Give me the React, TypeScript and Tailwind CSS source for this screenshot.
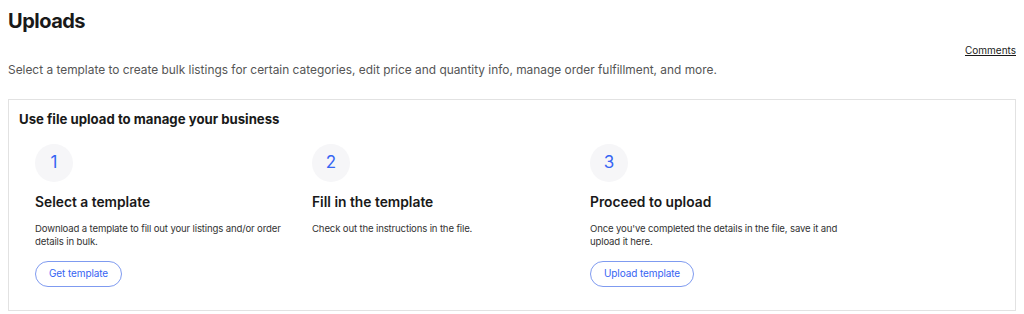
const steps = [
  {
    n: "1",
    title: "Select a template",
    body: "Download a template to fill out your listings and/or order details in bulk.",
    action: "Get template",
  },
  {
    n: "2",
    title: "Fill in the template",
    body: "Check out the instructions in the file.",
    action: null,
  },
  {
    n: "3",
    title: "Proceed to upload",
    body: "Once you've completed the details in the file, save it and upload it here.",
    action: "Upload template",
  },
];

export default function App() {
  return (
    <div className="w-[1024px] h-[314px] overflow-hidden bg-white px-2 font-['Inter',sans-serif] text-[#191919]">
      <h1 className="pt-[8px] text-[20px] leading-[26px] font-bold tracking-[-0.5px]">Uploads</h1>

      <div className="mt-[9px] flex justify-end">
        <a href="#" className="text-[10px] leading-[14px] underline text-[#191919]">
          Comments
        </a>
      </div>

      <p className="mt-[5px] text-[11.9px] leading-[16px] text-[#555]">
        Select a template to create bulk listings for certain categories, edit price and quantity info, manage order
        fulfillment, and more.
      </p>

      <section className="mt-[21px] h-[212px] border border-[#e2e2e2] px-[10px] pt-[10px]">
        <h2 className="text-[13.2px] leading-[18px] font-bold">Use file upload to manage your business</h2>

        <div className="mt-[16px] ml-[16px] grid grid-cols-[277px_278px_1fr]">
          {steps.map((s) => (
            <div key={s.n} className="flex flex-col items-start">
              <div className="flex h-[38px] w-[38px] items-center justify-center rounded-full bg-[#f6f6f8] text-[17px] text-[#3665f3]">
                {s.n}
              </div>
              <h3 className="mt-[11px] text-[13.8px] leading-[18px] font-semibold">{s.title}</h3>
              <p className="mt-[11px] w-[262px] text-[9.6px] leading-[13px] tracking-[-0.15px] text-[#333]">{s.body}</p>
              <div className="mt-[11px]">
                {s.action && (
                  <button className="h-[26px] rounded-full border border-[#7f9bf0] px-[13px] text-[10px] tracking-[-0.1px] text-[#3665f3]">
                    {s.action}
                  </button>
                )}
              </div>
            </div>
          ))}
        </div>
      </section>
    </div>
  );
}
